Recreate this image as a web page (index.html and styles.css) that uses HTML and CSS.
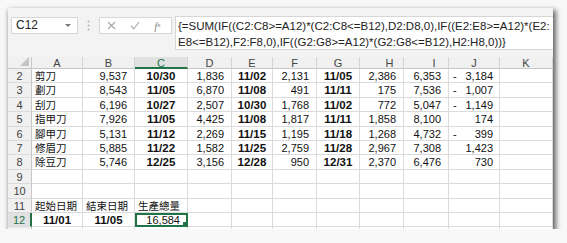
FILE: index.html
```html
<!DOCTYPE html>
<html>
<head>
    <title>生產總量</title>
    <link rel="stylesheet" href="styles.css">
</head>
<body>
    <div class="window">
        <div class="topbar">
            <div class="namebox">C12<span class="caret"></span></div>
            <div class="grip">
                <svg width="3" height="11" viewBox="0 0 3 11"><circle cx="1.5" cy="1.5" r="1" fill="#b4b4b4"/><circle cx="1.5" cy="5.5" r="1" fill="#b4b4b4"/><circle cx="1.5" cy="9.5" r="1" fill="#b4b4b4"/></svg>
            </div>
            <div class="fxbox">
                <span><svg width="9" height="9" viewBox="0 0 9 9"><path d="M1 1L8 8M8 1L1 8" stroke="#a6a6a6" stroke-width="1.1" fill="none"/></svg></span>
                <span><svg width="10" height="9" viewBox="0 0 10 9"><path d="M1 5L3.8 8L9 1" stroke="#a6a6a6" stroke-width="1.1" fill="none"/></svg></span>
                <span class="fx"><i>f</i><sub>x</sub></span>
            </div>
            <div class="formula">
                <div>{=SUM(IF((C2:C8&gt;=A12)*(C2:C8&lt;=B12),D2:D8,0),IF((E2:E8&gt;=A12)*(E2:</div>
                <div>E8&lt;=B12),F2:F8,0),IF((G2:G8&gt;=A12)*(G2:G8&lt;=B12),H2:H8,0))}</div>
            </div>
        </div>

        <div class="sheet">
            <div class="row head">
                <div class="corner"><span class="tri"></span></div>
                <div class="ch">A</div><div class="ch">B</div><div class="ch on">C</div><div class="ch">D</div>
                <div class="ch">E</div><div class="ch">F</div><div class="ch">G</div><div class="ch shift">H</div>
                <div class="ch shift">I</div><div class="ch">J</div><div class="ch">K</div>
            </div>
            <div class="row">
                <div class="rh">2</div><div class="c t">剪刀</div><div class="c n">9,537</div><div class="c d">10/30</div>
                <div class="c n">1,836</div><div class="c d">11/02</div><div class="c n">2,131</div><div class="c d">11/05</div>
                <div class="c n">2,386</div><div class="c n">6,353</div><div class="c acc"><span>-</span><span>3,184</span></div><div class="c"></div>
            </div>
            <div class="row">
                <div class="rh">3</div><div class="c t">劃刀</div><div class="c n">8,543</div><div class="c d">11/05</div>
                <div class="c n">6,870</div><div class="c d">11/08</div><div class="c n">491</div><div class="c d">11/11</div>
                <div class="c n">175</div><div class="c n">7,536</div><div class="c acc"><span>-</span><span>1,007</span></div><div class="c"></div>
            </div>
            <div class="row">
                <div class="rh">4</div><div class="c t">刮刀</div><div class="c n">6,196</div><div class="c d">10/27</div>
                <div class="c n">2,507</div><div class="c d">10/30</div><div class="c n">1,768</div><div class="c d">11/02</div>
                <div class="c n">772</div><div class="c n">5,047</div><div class="c acc"><span>-</span><span>1,149</span></div><div class="c"></div>
            </div>
            <div class="row">
                <div class="rh">5</div><div class="c t">指甲刀</div><div class="c n">7,926</div><div class="c d">11/05</div>
                <div class="c n">4,425</div><div class="c d">11/08</div><div class="c n">1,817</div><div class="c d">11/11</div>
                <div class="c n">1,858</div><div class="c n">8,100</div><div class="c acc"><span></span><span>174</span></div><div class="c"></div>
            </div>
            <div class="row">
                <div class="rh">6</div><div class="c t">腳甲刀</div><div class="c n">5,131</div><div class="c d">11/12</div>
                <div class="c n">2,269</div><div class="c d">11/15</div><div class="c n">1,195</div><div class="c d">11/18</div>
                <div class="c n">1,268</div><div class="c n">4,732</div><div class="c acc"><span>-</span><span>399</span></div><div class="c"></div>
            </div>
            <div class="row">
                <div class="rh">7</div><div class="c t">修眉刀</div><div class="c n">5,885</div><div class="c d">11/22</div>
                <div class="c n">1,582</div><div class="c d">11/25</div><div class="c n">2,759</div><div class="c d">11/28</div>
                <div class="c n">2,967</div><div class="c n">7,308</div><div class="c acc"><span></span><span>1,423</span></div><div class="c"></div>
            </div>
            <div class="row">
                <div class="rh">8</div><div class="c t">除豆刀</div><div class="c n">5,746</div><div class="c d">12/25</div>
                <div class="c n">3,156</div><div class="c d">12/28</div><div class="c n">950</div><div class="c d">12/31</div>
                <div class="c n">2,370</div><div class="c n">6,476</div><div class="c acc"><span></span><span>730</span></div><div class="c"></div>
            </div>
            <div class="row">
                <div class="rh">9</div><div class="c"></div><div class="c"></div><div class="c"></div><div class="c"></div><div class="c"></div>
                <div class="c"></div><div class="c"></div><div class="c"></div><div class="c"></div><div class="c"></div><div class="c"></div>
            </div>
            <div class="row">
                <div class="rh">10</div><div class="c"></div><div class="c"></div><div class="c"></div><div class="c"></div><div class="c"></div>
                <div class="c"></div><div class="c"></div><div class="c"></div><div class="c"></div><div class="c"></div><div class="c"></div>
            </div>
            <div class="row">
                <div class="rh">11</div><div class="c t">起始日期</div><div class="c t">結束日期</div><div class="c t">生產總量</div><div class="c"></div><div class="c"></div>
                <div class="c"></div><div class="c"></div><div class="c"></div><div class="c"></div><div class="c"></div><div class="c"></div>
            </div>
            <div class="row">
                <div class="rh on">12</div><div class="c d">11/01</div><div class="c d">11/05</div><div class="c n sel">16,584</div><div class="c"></div><div class="c"></div>
                <div class="c"></div><div class="c"></div><div class="c"></div><div class="c"></div><div class="c"></div><div class="c"></div>
            </div>
            <div class="row">
                <div class="rh"></div><div class="c"></div><div class="c"></div><div class="c"></div><div class="c"></div><div class="c"></div>
                <div class="c"></div><div class="c"></div><div class="c"></div><div class="c"></div><div class="c"></div><div class="c"></div>
            </div>
        </div>
    </div>
</body>
</html>
```

FILE: styles.css
```css
body {
    margin: 0;
    padding: 8px 0 0 8px;
    background-color: #f8f8f8;
    font-family: "Liberation Sans", "Noto Sans CJK TC", sans-serif;
}
.window {
    width: 545px;
    height: 221px;
    background-color: #f3f3f3;
    box-shadow: 2px 3px 5px 1px rgba(0, 0, 0, 0.6);
    overflow: hidden;
}

/* name box + formula bar */
.topbar {
    display: flex;
    align-items: flex-start;
    height: 49px;
}
.namebox {
    box-sizing: border-box;
    margin: 9px 0 0 3px;
    width: 67px;
    height: 17px;
    padding-left: 4px;
    background-color: #fff;
    border: 1px solid #d6d6d6;
    font-size: 12px;
    line-height: 15px;
    color: #222;
    position: relative;
}
.caret {
    position: absolute;
    right: 6px;
    top: 6px;
    border-left: 3px solid transparent;
    border-right: 3px solid transparent;
    border-top: 3px solid #777;
}
.grip {
    width: 21px;
    margin-top: 12px;
    display: flex;
    justify-content: center;
}
.fxbox {
    box-sizing: border-box;
    display: flex;
    align-items: center;
    margin-top: 9px;
    width: 73px;
    height: 17px;
    background-color: #fff;
    border: 1px solid #d6d6d6;
}
.fxbox span {
    width: 23px;
    display: flex;
    justify-content: center;
}
.fx {
    font-family: "Liberation Serif", serif;
    font-size: 11px;
    color: #8a8a8a;
}
.fx sub {
    font-size: 7px;
    vertical-align: baseline;
    position: relative;
    top: 1px;
}
.formula {
    box-sizing: border-box;
    flex: 1;
    margin: 8px 0 0 3px;
    height: 34px;
    padding: 1px 0 0 2px;
    background-color: #fff;
    border: 1px solid #d6d6d6;
    border-right: none;
    font-size: 11.5px;
    line-height: 16px;
    color: #222;
    white-space: nowrap;
    overflow: hidden;
}

/* grid */
.row {
    display: grid;
    grid-template-columns: 24px 51px 52px 53px 44px 41px 44px 43px 44px 45px 51px 53px;
    height: 14.4px;
}
.row.head {
    height: 12px;
}
.row > div {
    box-sizing: border-box;
    white-space: nowrap;
    overflow: hidden;
}
.corner {
    background-color: #f0f0f0;
    border-right: 1px solid #c8c8c8;
    border-bottom: 1px solid #c8c8c8;
    position: relative;
}
.tri {
    position: absolute;
    right: 2px;
    bottom: 2px;
    border-left: 9px solid transparent;
    border-bottom: 9px solid #c4c4c4;
}
.ch {
    background-color: #f0f0f0;
    border-right: 1px solid #d4d4d4;
    border-bottom: 1px solid #c8c8c8;
    text-align: center;
    font-size: 11px;
    line-height: 12px;
    color: #444;
}
.ch.shift {
    padding-left: 16px;
}
.ch.on {
    background-color: #e1e1e1;
    color: #217346;
    border-bottom: 2px solid #217346;
}
.rh {
    background-color: #f0f0f0;
    border-right: 1px solid #c8c8c8;
    border-bottom: 1px solid #dadada;
    text-align: center;
    font-size: 11px;
    line-height: 14px;
    color: #444;
}
.rh.on {
    background-color: #e1e1e1;
    color: #217346;
    border-right: 2px solid #217346;
}
.c {
    background-color: #fff;
    border-right: 1px solid #dadada;
    border-bottom: 1px solid #dadada;
    padding: 0 3px;
    font-size: 11px;
    line-height: 14px;
    color: #111;
}
.t {
    font-size: 10.5px;
}
.n {
    text-align: right;
    padding-right: 7px;
}
.d {
    text-align: center;
    font-weight: bold;
    font-size: 11.5px;
}
.acc {
    display: flex;
    justify-content: space-between;
    padding: 0 6px 0 4px;
}
.sel {
    position: relative;
    outline: 2px solid #217346;
    outline-offset: -2px;
}
.sel::after {
    content: "";
    position: absolute;
    right: 0;
    bottom: 0;
    width: 4px;
    height: 4px;
    background-color: #217346;
}
```
